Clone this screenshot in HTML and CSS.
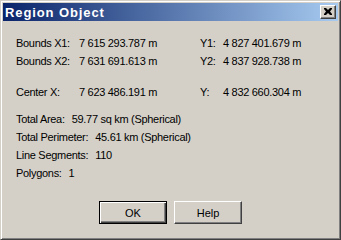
FILE: index.html
```html
<!DOCTYPE html>
<html>
<head>
<meta charset="utf-8">
<link rel="stylesheet" href="styles.css">
</head>
<body>
<div class="window">
  <div class="titlebar">
    <span class="title">Region Object</span>
    <span class="close"><svg width="8" height="7" viewBox="0 0 8 7"><path d="M0 0h2l2 2 2-2h2v1l-2 2.5 2 2.5v1h-2l-2-2-2 2h-2v-1l2-2.5-2-2.5z" fill="#000"/></svg></span>
  </div>
  <div class="content">
    <div class="grid">
      <span>Bounds X1:</span><span>7 615 293.787 m</span><span>Y1:</span><span>4 827 401.679 m</span>
      <span>Bounds X2:</span><span>7 631 691.613 m</span><span>Y2:</span><span>4 837 928.738 m</span>
    </div>
    <div class="grid center">
      <span>Center X:</span><span>7 623 486.191 m</span><span>Y:</span><span>4 832 660.304 m</span>
    </div>
    <div class="stats">
      <div>Total Area:<span class="val">59.77 sq km (Spherical)</span></div>
      <div>Total Perimeter:<span class="val">45.61 km (Spherical)</span></div>
      <div>Line Segments:<span class="val">110</span></div>
      <div>Polygons:<span class="val">1</span></div>
    </div>
    <div class="buttons">
      <button class="btn default"><span>OK</span></button>
      <button class="btn"><span>Help</span></button>
    </div>
  </div>
</div>
</body>
</html>
```

FILE: styles.css
```css
html, body {
  margin: 0;
  padding: 0;
  background: #d4d0c8;
}
.window {
  box-sizing: border-box;
  width: 341px;
  height: 240px;
  background: #d4d0c8;
  border-style: solid;
  border-width: 1px;
  border-color: #d4d0c8 #404040 #404040 #d4d0c8;
  box-shadow: inset 1px 1px 0 #ffffff, inset -1px -1px 0 #808080;
  padding: 2px;
  font-family: "Liberation Sans", Arial, sans-serif;
  font-size: 11px;
  letter-spacing: -0.3px;
  color: #000;
}
.titlebar {
  height: 18px;
  display: flex;
  align-items: center;
  justify-content: space-between;
  background: linear-gradient(to right, #0a246a, #a6caf0);
  padding: 0 2px 0 2px;
}
.title {
  color: #fff;
  font-weight: bold;
  font-size: 13px;
  font-family: "Liberation Sans", Arial, sans-serif;
  letter-spacing: 0.9px;
}
.close {
  box-sizing: border-box;
  width: 16px;
  height: 14px;
  background: #d4d0c8;
  border-style: solid;
  border-width: 1px;
  border-color: #ffffff #404040 #404040 #ffffff;
  box-shadow: inset -1px -1px 0 #808080;
  display: flex;
  align-items: center;
  justify-content: center;
  padding: 0 1px 1px 0;
}
.close svg { display: block; }
.content {
  padding: 13px 0 0 13px;
}
.grid {
  display: grid;
  grid-template-columns: 63px 121px 23px auto;
  grid-auto-rows: 18px;
  align-items: center;
}
.center {
  margin-top: 13px;
}
.stats {
  margin-top: 9px;
}
.stats div {
  height: 18px;
  line-height: 18px;
}
.val {
  margin-left: 7px;
}
.buttons {
  display: flex;
  gap: 7px;
  justify-content: center;
  margin: 19px 0 0 -13px;
}
.btn {
  box-sizing: border-box;
  width: 68px;
  height: 23px;
  margin: 0;
  padding: 0;
  background: #d4d0c8;
  font-family: "Liberation Sans", Arial, sans-serif;
  font-size: 11px;
  letter-spacing: 0;
  color: #000;
  border-style: solid;
  border-width: 1px;
  border-color: #ffffff #404040 #404040 #ffffff;
  box-shadow: inset -1px -1px 0 #808080;
}
.btn.default {
  border: 1px solid #000;
  box-shadow: inset 1px 1px 0 #ffffff, inset -1px -1px 0 #404040, inset -2px -2px 0 #808080;
}
```
